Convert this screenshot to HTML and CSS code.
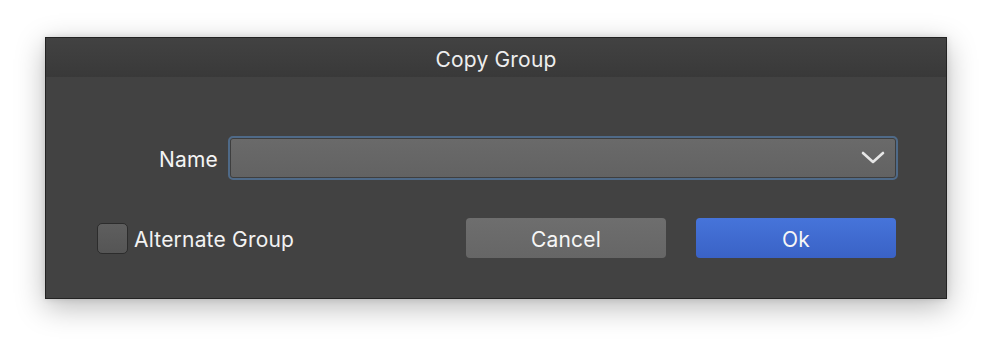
FILE: index.html
```html
<!DOCTYPE html>
<html>
<head>
<meta charset="utf-8">
<link rel="stylesheet" href="styles.css">
</head>
<body>
<div class="dialog">
  <div class="titlebar">Copy Group</div>
  <div class="content">
    <div class="name-row">
      <label class="name-label">Name</label>
      <div class="select">
        <svg class="chevron" width="24" height="14" viewBox="0 0 24 14"><path d="M2 2 L12 11 L22 2" fill="none" stroke="#e6e6e6" stroke-width="2.6" stroke-linecap="round" stroke-linejoin="round"/></svg>
      </div>
    </div>
    <div class="bottom-row">
      <div class="check">
        <span class="box"></span>
        <span class="check-label">Alternate Group</span>
      </div>
      <div class="buttons">
        <button class="btn cancel">Cancel</button>
        <button class="btn ok">Ok</button>
      </div>
    </div>
  </div>
</div>
</body>
</html>
```
FILE: styles.css
```css
* { box-sizing: border-box; }
html, body { margin: 0; background: #ffffff; }
body {
  width: 992px;
  height: 352px;
  padding: 37px 45px 0 45px;
  font-family: Inter, "Noto Sans", sans-serif;
  color: #f2f2f2;
}
.dialog {
  width: 902px;
  height: 262px;
  background: #424242;
  border: 1px solid #232323;
  box-shadow: 0 8px 28px rgba(0,0,0,0.28), 0 0 6px rgba(0,0,0,0.12);
  display: flex;
  flex-direction: column;
}
.titlebar {
  height: 39px;
  flex: none;
  background: linear-gradient(#424242, #393939);
  display: flex;
  align-items: center;
  justify-content: center;
  font-size: 21px;
  letter-spacing: 0.2px;
  color: #eeeeee;
  padding-top: 3px;
}
.content {
  flex: 1;
  padding-top: 59px;
  display: flex;
  flex-direction: column;
}
.name-row {
  display: flex;
  align-items: center;
  padding: 0 48px 0 51px;
  height: 44px;
}
.name-label {
  width: 121px;
  text-align: right;
  font-size: 21px;
  letter-spacing: 0.2px;
  margin-right: 10px;
  color: #f4f4f4;
  padding-top: 3px;
}
.select {
  flex: 1;
  height: 44px;
  border: 2px solid #4f6a88;
  border-radius: 5px;
  background: linear-gradient(#6a6a6a, #626262);
  box-shadow: inset 0 0 0 1px #3e3e3e;
  display: flex;
  align-items: center;
  justify-content: flex-end;
  padding-right: 11px;
}
.chevron { display: block; }
.bottom-row {
  margin-top: 38px;
  display: flex;
  align-items: center;
  justify-content: space-between;
  padding: 0 50px 0 51px;
  height: 40px;
}
.check {
  display: flex;
  align-items: center;
}
.box {
  width: 31px;
  height: 31px;
  border-radius: 5px;
  border: 1px solid #2c2c2c;
  background: linear-gradient(#5e5e5e, #555555);
  margin-right: 6px;
}
.check-label {
  font-size: 21px;
  letter-spacing: 0.2px;
  color: #f2f2f2;
  padding-top: 2px;
}
.buttons {
  display: flex;
  gap: 30px;
}
.btn {
  width: 200px;
  height: 40px;
  border: none;
  border-radius: 4px;
  font-family: Inter, "Noto Sans", sans-serif;
  font-size: 21px;
  letter-spacing: 0.2px;
  color: #f6f6f6;
  padding: 3px 0 0 0;
}
.cancel {
  background: linear-gradient(#6e6e6e, #666666);
}
.ok {
  background: linear-gradient(#4674da, #3a62c6);
}
```
